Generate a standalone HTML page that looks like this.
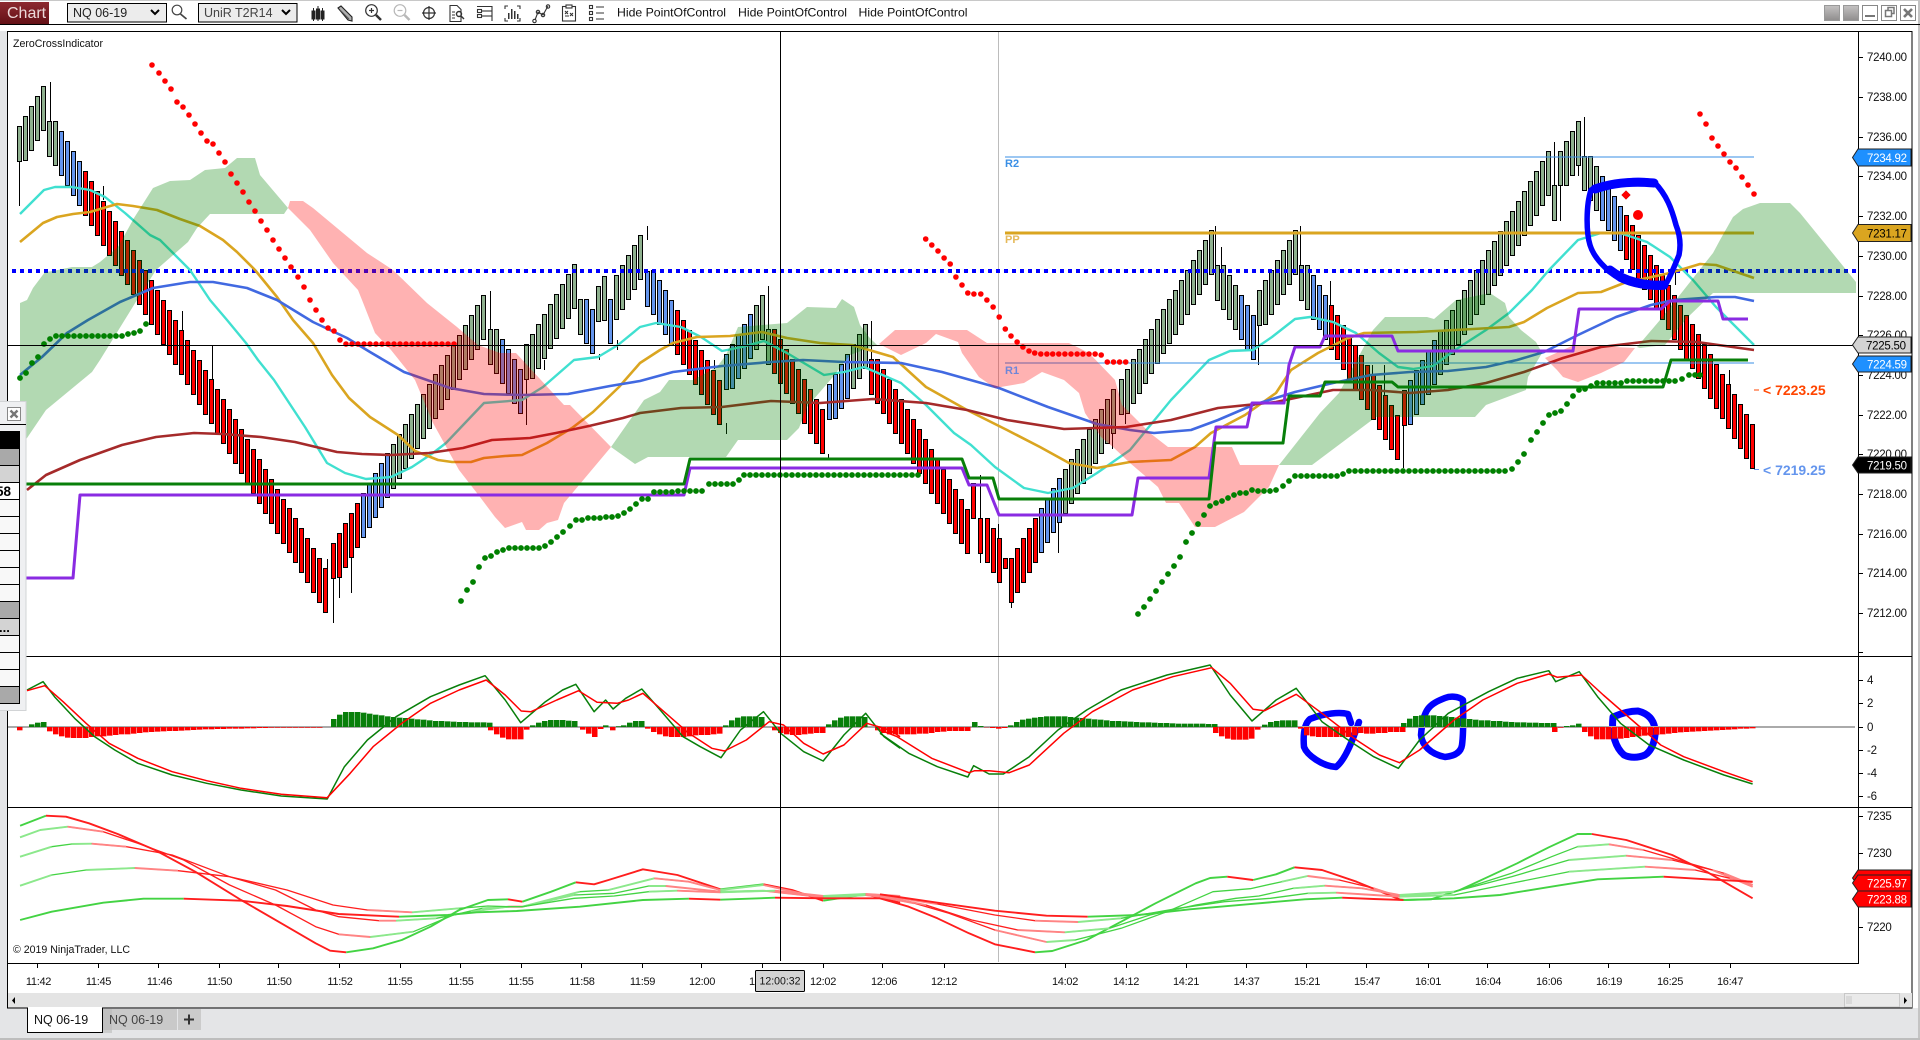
<!DOCTYPE html>
<html><head><meta charset="utf-8"><title>Chart</title>
<style>
html,body{margin:0;padding:0;background:#e4e5e7;overflow:hidden}
svg{display:block;position:absolute;left:0;top:0}
text{font-family:"Liberation Sans",Arial,sans-serif;fill:#111}
.y{font-size:11.5px;letter-spacing:-.25px}
.t{font-size:11px;text-anchor:middle;letter-spacing:-.3px}
.c{font-size:11.5px;letter-spacing:-.25px}
</style></head><body>
<svg width="1920" height="1040" viewBox="0 0 1920 1040">
<defs>
<linearGradient id="gb" x1="0" y1="0" x2="0" y2="1"><stop offset="0" stop-color="#c4c2c2"/><stop offset="1" stop-color="#8f8d8d"/></linearGradient>
<linearGradient id="rd" x1="0" y1="0" x2="0" y2="1"><stop offset="0" stop-color="#8d2a30"/><stop offset="1" stop-color="#641016"/></linearGradient>
<clipPath id="cp"><rect x="8" y="32" width="1850" height="930"/></clipPath>
</defs>
<rect width="1920" height="1040" fill="#e4e5e7"/>
<rect x="0" y="0" width="1920" height="31" fill="#fff"/>
<rect x="0" y="0" width="1920" height="1" fill="#c8c8c8"/>
<rect x="1912" y="25" width="8" height="983" fill="#fff"/>
<rect x="1918" y="0" width="2" height="1040" fill="#c4c4c4"/>
<rect x="0" y="1038" width="1920" height="2" fill="#bdbdbd"/>
<rect x="0" y="24" width="1920" height="1" fill="#000"/>

<!-- toolbar -->
<rect x="0" y="2" width="49" height="22" fill="url(#rd)"/>
<text x="7" y="18" font-size="16" style="fill:#ecd9d9">Chart</text>
<rect x="67.500" y="3.500" width="99" height="18.500" fill="#ececec" stroke="#000"/>
<text x="73" y="17" font-size="12.500" style="fill:#222">NQ 06-19</text>
<path d="M151 10l4 4 4-4" fill="none" stroke="#000" stroke-width="2"/>
<rect x="198.500" y="3.500" width="98.500" height="18.500" fill="#ececec" stroke="#000"/>
<text x="204" y="17" font-size="12.500" style="fill:#444">UniR T2R14</text>
<path d="M282 10l4 4 4-4" fill="none" stroke="#000" stroke-width="2"/>
<g fill="none" stroke="#444" stroke-width="1.200">
<circle cx="177" cy="10" r="4.800"/><path d="M180.500 14l6 5" stroke-width="1.700"/>
</g>
<g fill="#222" stroke="#222">
<path d="M313.500 8v13M318 6v15M322.500 8v13" stroke-width="1"/>
<rect x="312" y="11" width="3" height="8"/><rect x="316.500" y="9" width="3" height="10"/><rect x="321" y="11" width="3" height="8"/>
</g>
<path d="M338 8l3-2 11 11 0 4-4-1z" fill="#b0b0b0" stroke="#222" stroke-width="1.100"/>
<path d="M340 10l9 9" stroke="#555" stroke-width="1"/>
<g fill="none" stroke="#333" stroke-width="1.200"><circle cx="371.500" cy="10.500" r="5.800"/><path d="M369 10.500h5M371.500 8v5"/><path d="M376 15l5 5" stroke-width="2.500"/></g>
<g fill="none" stroke="#b8b8b8" stroke-width="1.200"><circle cx="400" cy="10.500" r="5.800"/><path d="M397.500 10.500h5"/><path d="M404.500 15l5 5" stroke-width="2.500"/></g>
<g fill="none" stroke="#333" stroke-width="1.200"><circle cx="429" cy="13" r="5.500"/><path d="M429 6v14M422 13h14"/></g>
<g fill="none" stroke="#333" stroke-width="1.100"><path d="M450 5.500h7l4 4v12h-11z"/><path d="M452 12h3M452 15h3M452 18h3"/><circle cx="459" cy="14" r="2.500" stroke-width="1.400"/><path d="M461 16l3 3" stroke-width="1.400"/></g>
<g fill="none" stroke="#333" stroke-width="1.100"><path d="M477 6.500h15M492 6v15"/><rect x="477.500" y="9.500" width="4" height="3"/><path d="M481 11h11"/><rect x="477.500" y="14.500" width="4" height="3"/><path d="M481 16h11"/></g>
<g fill="none" stroke="#333" stroke-width="1.100"><path d="M505 9v-3h3M517 6h3v3M520 18v3h-3M508 21h-3v-3"/></g>
<g fill="#333"><rect x="508" y="13" width="1.500" height="6"/><rect x="511" y="9" width="1.500" height="10"/><rect x="514" y="11" width="1.500" height="8"/><rect x="517" y="14" width="1.500" height="5"/></g>
<g fill="none" stroke="#333" stroke-width="1.100"><path d="M535 20l3-8 5 3 5-9"/><circle cx="534.500" cy="21" r="1.700"/><circle cx="538" cy="12" r="1.700"/><circle cx="543" cy="15" r="1.700"/><circle cx="548" cy="6.500" r="1.700"/></g>
<g fill="none" stroke="#333" stroke-width="1.100"><rect x="562.500" y="6.500" width="13" height="14.500"/><rect x="566" y="5" width="6" height="3" fill="#fff"/><path d="M565 11l3 3M568 11l-3 3M570 13l3 3M573 13l-3 3M565 16h4"/></g>
<g fill="none" stroke="#333" stroke-width="1.100"><rect x="589.500" y="5.500" width="3" height="3"/><rect x="589.500" y="11.500" width="3" height="3"/><rect x="589.500" y="17.500" width="3" height="3"/><path d="M596 7h8M596 13h8M596 19h8"/></g>
<text x="617" y="16.500" font-size="12" textLength="109" lengthAdjust="spacingAndGlyphs" style="fill:#111">Hide PointOfControl</text>
<text x="738" y="16.500" font-size="12" textLength="109" lengthAdjust="spacingAndGlyphs" style="fill:#111">Hide PointOfControl</text>
<text x="858.500" y="16.500" font-size="12" textLength="109" lengthAdjust="spacingAndGlyphs" style="fill:#111">Hide PointOfControl</text>
<rect x="1824.500" y="5.500" width="15" height="15" fill="url(#gb)" stroke="#999"/>
<rect x="1843.500" y="5.500" width="15" height="15" fill="url(#gb)" stroke="#999"/>
<rect x="1862.500" y="5.500" width="15" height="15" fill="#fff" stroke="#888"/><path d="M1865 16h10" stroke="#777" stroke-width="2"/>
<rect x="1881.500" y="5.500" width="15" height="15" fill="#fff" stroke="#888"/><path d="M1885.500 10.500h6v6h-6zM1888 10v-2.500h6v6h-2" fill="none" stroke="#777" stroke-width="1.500"/>
<rect x="1900.500" y="5.500" width="15" height="15" fill="#fff" stroke="#888"/><path d="M1904 9l8 8M1912 9l-8 8" stroke="#777" stroke-width="2.600"/>

<!-- chart frame -->
<rect x="7.500" y="31.500" width="1904.500" height="976.500" fill="#fff" stroke="#000"/>
<rect x="8" y="993" width="1904" height="14.500" fill="#e4e4e4"/>

<g clip-path="url(#cp)">
<path d="M998.500 32V962" stroke="#bcbcbc" stroke-width="1"/>
<g id="bars" stroke="#000" stroke-width="1"></g>
<path d="M12 271H1856" stroke="#0000ff" stroke-width="4" stroke-dasharray="4 4"/>
<g id="mas" fill="none" stroke-linejoin="round"></g>
<path d="M1005 157H1754M1005 363H1754" stroke="#3a8fe6" stroke-width="1"/>
<path d="M1005 233H1754" stroke="#daa520" stroke-width="3"/>
<g fill="#008000" fill-opacity=".3">
<polygon points="20,303 27,300 33,288 45,272 53,271 72,267 92,267 100,262 118,247 134,218 153,188 170,181 190,180 205,170 225,168 237,158 255,158 260,175 288,208 284,214 210,214 197,228 188,242 156,270 137,300 100,360 92,372 46,410 27,438 20,445"/>
<polygon points="611,447 644,400 660,392 669,380 693,380 717,367 726,355 738,327 787,323 807,307 836,308 842,299 854,307 860,325 869,337 877,345 850,355 832,378 807,407 799,428 787,440 738,440 726,457 648,457 635,464"/>
<polygon points="1279,465 1320,413 1339,393 1373,330 1385,317 1427,317 1434,319 1456,300 1490,293 1505,303 1509,317 1521,330 1536,342 1542,353 1528,377 1526,390 1486,405 1475,417 1376,417 1312,465"/>
<polygon points="1637,347 1660,320 1713,253 1720,240 1733,217 1743,209 1760,203 1790,203 1800,213 1822,240 1856,282 1856,293 1713,293 1687,318 1665,345 1640,348"/>
</g>
<g fill="#ff0000" fill-opacity=".3">
<polygon points="288,208 290,201 303,201 313,208 367,253 393,270 427,303 457,327 478,345 500,353 516,353 564,405 570,405 611,447 564,503 558,520 547,523 539,530 526,530 522,522 505,528 495,517 480,497 459,470 433,423 415,380 391,350 375,333 362,300 358,290 333,263 310,230"/>
<polygon points="879,344 895,330 967,330 987,343 1069,343 1089,353 1115,380 1122,405 1150,433 1168,447 1232,447 1240,465 1279,465 1269,487 1244,512 1215,527 1195,527 1179,503 1166,503 1158,487 1130,463 1113,447 1101,437 1085,413 1079,393 1064,380 1042,372 1024,383 995,388 979,377 962,353 958,342 936,334 926,343 901,355"/>
<polygon points="1545,358 1574,345 1635,348 1624,362 1601,373 1578,382 1563,377 1557,370"/>
</g>
<g fill="none" stroke-linejoin="round">
<polyline stroke="#8a2be2" stroke-width="3" points="26,578 73,578 80,495 684,495 690,468 962,468 969,485 987,485 999,515 1132,515 1138,478 1209,478 1216,427 1247,427 1252,403 1284,403 1289,365 1295,347 1320,347 1325,336 1392,336 1398,351 1573,351 1579,309 1661,309 1670,301 1718,301 1723,319 1748,319"/>
<polyline stroke="#087f0a" stroke-width="3" points="26,484 684,484 690,459 962,459 969,478 993,478 999,499 1209,499 1215,443 1283,443 1289,396 1320,396 1325,382 1392,382 1398,387 1663,387 1671,360 1748,360"/>
</g>
<g id="dots"></g>
<!-- hand drawn marks -->
<g fill="none" stroke="#0000ff" stroke-linecap="round" stroke-linejoin="round">
<path stroke-width="5.500" d="M1654 182C1640 179 1618 180 1591 190C1586 205 1586 232 1590 245C1594 258 1606 270 1620 279C1632 285 1650 288 1664 287C1669 280 1675 265 1679 255C1681 245 1680 235 1676 225C1672 210 1667 195 1654 182Z"/>
<path stroke-width="9" d="M1595 189C1612 183 1632 181 1654 183"/>
<path stroke-width="9" d="M1610 270C1625 282 1645 286 1664 285"/>
<path stroke-width="6.500" d="M1351 723L1348 714C1340 712 1325 713 1310 719C1304 724 1303 735 1304 747C1307 755 1322 766 1336 767C1345 760 1352 742 1359 722"/>
<path stroke-width="6.500" d="M1463 700C1458 696 1450 696 1445 698C1430 704 1423 708 1421 735C1422 745 1430 754 1445 757C1455 756 1461 752 1462 745C1464 730 1463 715 1463 700Z"/>
<path stroke-width="7" d="M1613 717C1622 713 1630 711 1638 711C1650 714 1656 722 1655 735C1654 745 1650 752 1645 755C1638 758 1630 758 1624 755C1616 748 1611 735 1613 717Z"/>
</g>
<path d="M1626 190.500l4.500 4.500-4.500 4.500-4.500-4.500z" fill="#ff0000" stroke="#c33" stroke-width=".5"/>
<circle cx="1638" cy="215" r="5" fill="#ff0000"/>
<!-- MACD -->
<path d="M8 727H1855" stroke="#aaa" stroke-width="2"/>
<g id="hist"></g>
<g id="macd" fill="none" stroke-width="1.500" stroke-linejoin="round"></g>
<g id="rib" fill="none" stroke-linejoin="round"></g>
<!-- crosshair -->
<path d="M780.500 32V961" stroke="#000" stroke-width="1"/>
<path d="M8 345.500H1858" stroke="#000" stroke-width="1"/>
</g>
<path d="M7 656.500H1912M7 807.500H1912M7 963.500H1858M1858.500 31V964" stroke="#000" stroke-width="1"/>

<text x="13" y="47" font-size="10.700" textLength="90" lengthAdjust="spacingAndGlyphs">ZeroCrossIndicator</text>
<text x="13" y="953" font-size="10.700" textLength="117" lengthAdjust="spacingAndGlyphs">© 2019 NinjaTrader, LLC</text>
<text x="1005" y="167" font-size="11" font-weight="bold" style="fill:#3a8fe6">R2</text>
<text x="1005" y="243" font-size="11" font-weight="bold" style="fill:#e5b95a">PP</text>
<text x="1005" y="374" font-size="11" font-weight="bold" style="fill:#6f86d8">R1</text>
<path d="M1754 390h5" stroke="#ff4500"/><path d="M1754 469.500h5" stroke="#6495ed"/>
<text x="1763" y="395" font-size="14" font-weight="bold" style="fill:#ff4500">&lt; 7223.25</text>
<text x="1763" y="475" font-size="14" font-weight="bold" style="fill:#6495ed">&lt; 7219.25</text>

<!-- y axis -->
<path stroke="#000" d="M1858 57.500h5M1858 97.500h5M1858 137.500h5M1858 176.500h5M1858 216.500h5M1858 256.500h5M1858 296.500h5M1858 335.500h5M1858 375.500h5M1858 415.500h5M1858 454.500h5M1858 494.500h5M1858 534.500h5M1858 573.500h5M1858 613.500h5M1858 652.500h5M1858 680.500h5M1858 703.500h5M1858 727.500h5M1858 750.500h5M1858 773.500h5M1858 796.500h5M1858 816.500h5M1858 853.500h5M1858 927.500h5"/>
<g class="y">
<text x="1867" y="61">7240.00</text><text x="1867" y="101">7238.00</text><text x="1867" y="141">7236.00</text><text x="1867" y="180">7234.00</text><text x="1867" y="220">7232.00</text><text x="1867" y="260">7230.00</text><text x="1867" y="300">7228.00</text><text x="1867" y="339">7226.00</text><text x="1867" y="379">7224.00</text><text x="1867" y="419">7222.00</text><text x="1867" y="458">7220.00</text><text x="1867" y="498">7218.00</text><text x="1867" y="538">7216.00</text><text x="1867" y="577">7214.00</text><text x="1867" y="617">7212.00</text>
<text x="1867" y="684">4</text><text x="1867" y="707">2</text><text x="1867" y="731">0</text><text x="1867" y="754">-2</text><text x="1867" y="777">-4</text><text x="1867" y="800">-6</text>
<text x="1867" y="820">7235</text><text x="1867" y="857">7230</text><text x="1867" y="931">7220</text>
</g>
<!-- price chips -->
<g stroke="#222" stroke-width="1">
<polygon fill="#1e90ff" points="1852.500,157.500 1858,149 1911,149 1911,166 1858,166"/>
<polygon fill="#daa520" points="1852.500,233 1858,224.500 1911,224.500 1911,241.500 1858,241.500"/>
<polygon fill="#d3d3d3" points="1852.500,345 1858,337 1911,337 1911,353 1858,353"/>
<polygon fill="#1e90ff" points="1852.500,364 1858,356 1911,356 1911,372 1858,372"/>
<polygon fill="#000" points="1852.500,465 1858,457 1911,457 1911,473 1858,473"/>
<polygon fill="#ff0000" points="1852.500,878 1858,870 1911,870 1911,886 1858,886"/>
<polygon fill="#ff0000" points="1852.500,883 1858,875 1911,875 1911,891 1858,891"/>
<polygon fill="#ff0000" points="1852.500,899 1858,891 1911,891 1911,907 1858,907"/>
</g>
<g class="c">
<text x="1867" y="162" style="fill:#fff">7234.92</text>
<text x="1867" y="237.500" style="fill:#000">7231.17</text>
<text x="1866" y="349.500" style="fill:#000">7225.50</text>
<text x="1867" y="368.500" style="fill:#fff">7224.59</text>
<text x="1867" y="469.500" style="fill:#fff">7219.50</text>
<text x="1867" y="887.500" style="fill:#fff">7225.97</text>
<text x="1867" y="903.500" style="fill:#fff">7223.88</text>
</g>

<!-- x axis -->
<path stroke="#000" d="M37.500 963v5M98.500 963v5M158.500 963v5M219.500 963v5M278.500 963v5M339.500 963v5M400.500 963v5M460.500 963v5M521.500 963v5M581.500 963v5M642.500 963v5M701.500 963v5M762.500 963v5M823.500 963v5M882.500 963v5M944.500 963v5M1065.500 963v5M1126.500 963v5M1186.500 963v5M1246.500 963v5M1306.500 963v5M1366.500 963v5M1428.500 963v5M1487.500 963v5M1549.500 963v5M1608.500 963v5M1669.500 963v5M1730.500 963v5"/>
<g class="t">
<text x="38.500" y="985">11:42</text><text x="98.500" y="985">11:45</text><text x="159.500" y="985">11:46</text><text x="219.500" y="985">11:50</text><text x="279" y="985">11:50</text><text x="340" y="985">11:52</text><text x="400" y="985">11:55</text><text x="461" y="985">11:55</text><text x="521" y="985">11:55</text><text x="582" y="985">11:58</text><text x="642.500" y="985">11:59</text><text x="702" y="985">12:00</text><text x="762" y="985">12:01</text><text x="823" y="985">12:02</text><text x="884" y="985">12:06</text><text x="944" y="985">12:12</text><text x="1065" y="985">14:02</text><text x="1126" y="985">14:12</text><text x="1186" y="985">14:21</text><text x="1246.500" y="985">14:37</text><text x="1307" y="985">15:21</text><text x="1367" y="985">15:47</text><text x="1428" y="985">16:01</text><text x="1488" y="985">16:04</text><text x="1549" y="985">16:06</text><text x="1609" y="985">16:19</text><text x="1670" y="985">16:25</text><text x="1730" y="985">16:47</text>
</g>
<rect x="755.500" y="970.500" width="49" height="21" fill="#d3d3d3" stroke="#000" rx="1"/>
<text x="780" y="984.500" font-size="10.700" text-anchor="middle" textLength="41" lengthAdjust="spacingAndGlyphs">12:00:32</text>

<!-- scrollbar -->
<path d="M15 997v7l-3-3.500z" fill="#000"/>
<rect x="1844.500" y="993.500" width="55" height="13.500" fill="#eaeaea" stroke="#c8c8c8"/>
<path d="M1847 996v8M1849 996v8M1851 996v8" stroke="#c8c8c8"/>
<path d="M1904 997v7l3-3.500z" fill="#000"/>

<!-- tabs -->
<rect x="102" y="1009" width="75" height="21" fill="#c9c9c9"/>
<rect x="178" y="1009" width="23" height="21" fill="#cbcbcb"/>
<rect x="102" y="1009" width="10" height="24" fill="#bbb" opacity=".6"/>
<rect x="27.500" y="1008" width="75" height="24.500" fill="#fff" stroke="#000"/>
<rect x="28" y="1007" width="74" height="2" fill="#fff"/>
<text x="34" y="1024" font-size="12.500" style="fill:#111">NQ 06-19</text>
<text x="109" y="1024" font-size="12.500" style="fill:#444">NQ 06-19</text>
<path d="M184 1019.500h10M189 1014.500v10" stroke="#333" stroke-width="2"/>

<!-- floating data box -->
<rect x="-2" y="401.500" width="28" height="309" fill="#eff0f2" stroke="#d2d4d6"/>
<rect x="7.500" y="407.500" width="13" height="13" fill="#fff" stroke="#888"/>
<path d="M10.500 410.500l7 7M17.500 410.500l-7 7" stroke="#777" stroke-width="2.400"/>
<path d="M0 424.500H26" stroke="#000"/>
<g stroke="#000" stroke-width="1">
<rect x="-2" y="431.500" width="21.500" height="17" fill="#000"/>
<rect x="-2" y="448.500" width="21.500" height="17" fill="#a9a9a9"/>
<rect x="-2" y="465.500" width="21.500" height="17" fill="#d3d3d3"/>
<rect x="-2" y="482.500" width="21.500" height="17" fill="#fff"/>
<rect x="-2" y="499.500" width="21.500" height="17" fill="#f8f8f8"/>
<rect x="-2" y="516.500" width="21.500" height="17" fill="#f8f8f8"/>
<rect x="-2" y="533.500" width="21.500" height="17" fill="#f8f8f8"/>
<rect x="-2" y="550.500" width="21.500" height="17" fill="#f8f8f8"/>
<rect x="-2" y="567.500" width="21.500" height="17" fill="#f8f8f8"/>
<rect x="-2" y="584.500" width="21.500" height="17" fill="#f8f8f8"/>
<rect x="-2" y="601.500" width="21.500" height="17" fill="#a9a9a9"/>
<rect x="-2" y="618.500" width="21.500" height="17" fill="#d3d3d3"/>
<rect x="-2" y="635.500" width="21.500" height="17" fill="#f8f8f8"/>
<rect x="-2" y="652.500" width="21.500" height="17" fill="#f8f8f8"/>
<rect x="-2" y="669.500" width="21.500" height="17" fill="#f8f8f8"/>
<rect x="-2" y="686.500" width="21.500" height="17" fill="#a9a9a9"/>
</g>
<text x="-4" y="496" font-size="13.500" font-weight="bold" style="fill:#000">58</text>
<text x="-1" y="632" font-size="13" font-weight="bold" style="fill:#000">...</text>
</svg>
<script>
(function(){
var G='#8fb18f',B='#6495ed',R='#ff0000';
var $=function(i){return document.getElementById(i)};
var P=function(s){return s.trim().split(/\s+/).map(function(p){return p.split(',').map(Number)})};
var S=function(a){return a.map(function(p){return p[0].toFixed(1)+','+p[1].toFixed(1)}).join(' ')};
var zf=function(x0,sx,y0){return function(p){return [x0+p[0]/sx,y0+p[1]/3]}};
var z7=zf(0,3,60),z9=zf(640,2.45,220),z10=zf(1180,2.613,110),z2=zf(1500,3,0),z11=zf(0,1.742,650),z12=zf(880,1.742,650);
/* bars */
var b='';
function run(x,t,n,d,c,h){h=h||45;for(var i=0;i<n;i++){b+='<rect x="'+(Math.round(x+6*i)+.5)+'" y="'+(Math.round(t+d*i)+.5)+'" width="4" height="'+(h-1)+'" fill="'+c+'"/>'}}
var w=[[19.5,161,206],[50,82,121],[103,186,200],[182,311,330],[212.5,345,379],[327,559,568],[333,578,623],[339,578,598],[351,558,593],[490,291,329],[526,345,425],[544,360,370],[599,354,360],[617,340,350],[647,226,240],[714,360,369],[726.5,423,434],[768.5,286,329],[828.5,454,459],[871,321,359],[980,475,563],[998,524,538],[998,568,583],[1011,603,608],[1058,523,553],[1112,434,449],[1125.5,414,424],[1215.5,226,265],[1221,247,265],[1258.5,325,365],[1300,226,265],[1276,285,303],[1330,281,305],[1372,365,375],[1384,365,395],[1403,425,468],[1554,142,185],[1560,185,221],[1578,166,176],[1584.5,117,156],[1675.5,272,285],[1729.5,370,385],[1754,464,469]];
var ws='';w.forEach(function(a){ws+='<path d="M'+(Math.floor(a[0])+.5)+' '+a[1]+'V'+a[2]+'"/>'});
run(17,126,1,0,G,36);run(23,116,4,-10,G);run(47,121,1,0,G,36);run(53,121,1,0,G);run(59,131,4,10,B);run(83,171,41,9.925,R);
run(331,543,1,0,R,36);run(337,533,4,-10,R);run(361,493,5,-10,B);run(391,444,15,-9.93,G);run(481,295,1,0,G);
run(488,329,1,0,G,36);run(494,329,1,0,G);run(500,339,4,10,B);
run(524,344,1,0,G,36);run(530,334,8,-10,G);run(578,299,1,0,G,36);run(584,299,1,0,B);run(590,309,1,0,B);
run(596,286,1,0,G,36);run(602,276,1,0,G);run(608,299,1,0,B);run(614,275,5,-10,G);
run(645,271,1,0,B,36);run(651,270,4,10,B);run(675,310,8,10,R);
run(724,354,1,0,B,36);run(730,344,4,-10,B);run(754,305,2,-10,G);
run(766,329,1,0,G,36);run(772,329,9,10,R);
run(827,384,1,0,B,36);run(833,374,3,-10,B);run(851,344,3,-10,G);
run(869,359,1,0,R,36);run(875,359,16,10,R);
run(971,483,1,0,R,36);run(978,518,1,0,R,36);run(985,518,3,10,R);run(1003,558,1,0,R,11);run(1009,558,1,0,R);
run(1015,548,4,-10,R);run(1039,508,4,-10,B);run(1063,469,9,-10,G);
run(1119,379,1,0,G,36);run(1125,369,15,-9.93,G);
run(1215,265,1,0,G,36);run(1221,265,3,10,G);run(1239,295,3,10,B);
run(1257,290,1,0,G,36);run(1263,280,6,-10,G);
run(1299,265,1,0,G,36);run(1305,265,1,0,G);run(1311,275,3,10,B);run(1329,305,12,10,R);
run(1402,390,1,0,R,36);run(1408,380,5,-10,B);run(1438,330,19,-9.94,G);
run(1552,185,1,0,G,36);run(1558,151,1,0,G,35);run(1564,141,3,-10,G);
run(1582,156,1,0,G,35);run(1588,156,2,10,G);run(1600,176,4,10,B);run(1624,215,22,9.95,R);
$('bars').innerHTML=ws+b;
/* moving averages */
var ma=[
['#40e0d0',2.4,'20,214 44,190 55,187 72,187 90,190 105,197 125,213 150,235 160,240 190,270 210,300 227,320 246,343 258,360 274,380 305,427 327,463 345,473 366,479 391,477 412,467 433,453 446,443 484,403 522,400 543,387 574,360 598,357 618,345 640,327 656,323 681,327 701,337 722,351 742,347 764,341 787,353 824,375 844,372 864,367 901,383 926,405 954,433 971,445 995,467 1024,488 1048,493 1073,488 1097,473 1130,450 1171,400 1209,360 1230,351 1253,350 1272,337 1295,319 1310,317 1333,322 1356,333 1379,353 1398,367 1413,369 1433,366 1455,350 1486,330 1509,313 1532,290 1549,270 1578,240 1601,233 1620,233 1647,242 1670,257 1693,280 1716,307 1739,330 1754,345'],
['#daa520',2.6,'20,242 43,223 57,217 73,214 90,212 117,204 133,206 157,210 180,219 200,226 223,240 237,252 255,270 277,297 293,320 313,343 332,375 349,398 370,417 398,435 415,451 438,460 452,462 471,462 484,458 505,456 522,455 547,443 572,428 593,412 619,387 640,363 660,350 673,343 697,337 730,336 762,332 787,338 820,343 852,345 893,357 926,387 967,410 1007,430 1040,447 1069,463 1097,468 1130,462 1171,460 1195,447 1211,433 1245,415 1276,393 1291,370 1318,353 1348,338 1364,333 1417,332 1455,330 1509,327 1524,322 1547,308 1578,293 1601,292 1624,283 1670,273 1700,264 1716,265 1754,278'],
['#4169e1',2.6,'20,375 42,357 67,333 88,320 120,302 153,288 190,282 213,282 247,288 277,300 313,322 347,338 370,352 404,372 450,388 484,394 522,395 568,394 610,386 640,381 673,372 722,366 771,362 803,360 844,362 901,363 942,372 999,388 1048,407 1097,424 1130,430 1154,433 1191,430 1218,420 1253,405 1295,392 1333,383 1371,375 1410,372 1448,371 1486,367 1517,360 1544,352 1578,335 1616,317 1651,305 1674,300 1716,297 1735,297 1754,301'],
['#a52a2a',2.6,'27,490 46,475 80,460 122,445 156,437 194,433 223,434 261,437 295,442 337,452 362,454 391,455 429,453 463,448 492,440 530,438 556,433 589,426 623,418 640,413 681,408 722,407 771,401 820,403 873,399 926,403 967,410 1007,420 1064,429 1126,427 1171,420 1218,408 1276,402 1333,390 1371,390 1410,393 1448,390 1486,383 1524,372 1563,358 1601,347 1651,341 1697,342 1754,350']];
var m='';ma.forEach(function(a){m+='<polyline stroke="'+a[0]+'" stroke-width="'+a[1]+'" points="'+a[2]+'"/>'});$('mas').innerHTML=m;
/* dots */
var d='';
function dot(arr,c,r){arr.forEach(function(p){d+='<circle cx="'+p[0].toFixed(1)+'" cy="'+p[1].toFixed(1)+'" r="'+r+'" fill="'+c+'"/>'})}
function flat(a,b2,y,st){var o=[];for(var x=a;x<=b2;x+=(st||6))o.push([x,y]);return o}
dot(P('456,15 477,39 495,63 513,87 531,126 549,141 567,165 585,192 603,219 621,243 639,252 657,279 675,306 693,342 711,369 729,396 747,426 765,453 783,483 801,510 819,540 837,567 855,594 873,621 894,651 912,681 930,720 948,750 966,780 984,804 1002,813 1020,840').map(z7),'#ff0000',2.8);
dot(flat(346,455,344),'#ff0000',2.8);
dot(P('700,57 715,75 730,93 745,114 760,132 774,171 789,195 803,219 818,222 835,222 850,240 865,261 880,291 895,327 909,348 924,366 938,381 953,393 967,399 982,402 997,402 1011,402 1026,402 1041,402 1056,402 1071,402 1085,402 1100,402 1115,402 1130,405 1145,426 1160,426 1175,426 1190,426').map(z9),'#ff0000',2.8);
dot(P('600,342 618,372 636,414 654,438 672,462 690,486 708,504 726,531 744,555 762,582').map(z2),'#ff0000',2.8);
var g=P('20,378 26,373 32,363 38,357 44,344 50,339').concat(flat(56,122,336),P('128,334 134,333 140,331 146,324'));
g=g.concat(P('461,601 467,590 473,582 479,567 485,558 491,556 497,552 503,550'),flat(509,539,548),P('545,546 551,542 557,537 563,532 570,526 576,520 582,520 588,518 594,518 600,518 606,517 612,517 618,516 624,513 630,509 636,504 642,499 648,499 654,492 660,492 666,492 672,492 678,491 684,491 690,491 696,491 702,491 709,484 715,484 721,484 727,484 733,484 739,480 744,475'),flat(750,921,475));
g=g.concat(P('1138,614 1144,607 1150,599 1156,591 1162,582 1168,574 1174,566 1180,557 1186,542 1192,533 1198,524 1204,515 1210,506 1216,503 1222,501 1228,498 1234,495 1240,493 1246,493 1252,490 1258,491 1264,491 1270,491 1276,490 1283,486 1289,481 1295,476'),flat(1301,1339,476),[[1343,474]],flat(1349,1509,471),P('1512,469 1518,462 1524,454 1531,440 1537,432 1543,423 1549,415 1555,413 1561,411 1567,404 1573,396 1579,390 1585,389 1591,386 1597,383'),flat(1603,1621,383),flat(1627,1677,381),P('1682,379 1689,375 1695,375 1700,375'));
dot(g,'#008000',2.9);
$('dots').innerHTML=d;
/* histogram */
var h='';
function hist(x,c,a){a.forEach(function(v,i){var H=v/3;var up=c=='#087f0a';h+='<rect x="'+(x+6*i)+'" y="'+(up?727-H:727)+'" width="5.5" height="'+H+'" fill="'+c+'"/>'})}
var Gn='#087f0a',Rd='#ff0000';
hist(17,Rd,[10]);hist(29,Gn,[8,13,15]);
hist(47,Rd,[13,22,28,32,33,33,33,30,28,28,26,24,22,22,20,18,16,15,14,13,12,12,11,10,9,8,7,7,6,6,5,5,5,4,4,3,3,2,2,2,2,2,2,2,2,2]);
hist(331,Gn,[24,37,45,45,45,43,40,37,35,32,30,28,27,25,23,22,20,18,18,17,16,15,15,14,14,14,13]);
hist(488,Rd,[10,22,32,37,37,37,8]);hist(530,Gn,[5,13,18,21,21,21,19,18]);
hist(580,Rd,[8,20,30,6]);hist(603,Gn,[5]);hist(610,Rd,[10]);hist(616,Gn,[2]);hist(621,Gn,[5,13,18,18]);
hist(645,Rd,[5,15,22,28,30,30,30,28,25,24,24,22,20]);hist(723,Gn,[5,20,28,32,32,32,30]);
hist(772,Rd,[10,18,22,24,24,22,20,18,18]);hist(826,Gn,[8,20,28,32,32,32,30]);
hist(875,Rd,[10,18,22,22,22,22,22,20,20,18,15,14,12,12,12,12]);
hist(972,Gn,[15,3]);hist(984,Rd,[1,3,5,3]);
hist(1008,Gn,[5,15,22,25,28,30,32,32,32,32,30,28,27,25,23,22,20,18,18,17,16,15,14,14,13,12,12,11,10,10,10,10,10,9,9]);
hist(1213,Rd,[18,28,35,38,38,38,35,8]);hist(1262,Gn,[7,15,18,20,20,20]);
hist(1298,Rd,[5,25,28,30,30,30,30,30,30,25,18,20,20,18,18,15,15,15]);
hist(1401,Gn,[12,25,33,35,35,35,33,32,30,28,26,24,22,20,20,18,18,16,15,14,14,13,13,12,12,12]);
hist(1552,Rd,[15,2]);hist(1564,Gn,[3,5,10]);
hist(1582,Rd,[15,28,37,37,37,35,35,33,30,28,26,25,23,22,20,18,16,15,14,13,12,11,10,9,8,7,5,5,4]);
$('hist').innerHTML=h;
/* macd */
var mc='';
function pl(s,z,c){mc+='<polyline stroke="'+c+'" points="'+S(P(s).map(z))+'"/>'}
pl('47,120 75,95 95,140 130,205 165,260 200,300 240,340 300,375 360,400 420,420 490,438 570,447 600,350 640,270 690,200 750,140 800,105 845,77 880,150 907,218 950,155 980,120 1003,103 1035,185 1055,150 1068,177 1090,145 1118,117 1150,180 1190,260 1220,290 1256,323 1290,240 1330,185 1360,250 1400,305 1434,333 1470,255 1508,190 1540,260 1568,295',z11,'#087f0a');
pl('0,250 50,310 100,350 153,381 163,347 190,372 215,372 260,320 310,240 360,180 420,120 500,75 575,45 610,135 648,213 690,150 725,115 770,215 820,275 860,320 903,355 940,270 990,190 1060,125 1110,85 1165,62 1177,95 1218,65 1250,140 1290,220 1340,285 1400,330 1470,375 1520,402',z12,'#087f0a');
pl('47,122 78,107 110,155 150,220 190,280 240,325 300,365 360,392 420,415 490,433 570,443 610,370 650,290 700,220 750,160 800,120 847,90 880,135 908,183 925,185 970,150 1008,122 1040,157 1075,160 1095,150 1120,130 1160,190 1200,250 1240,295 1262,303 1300,270 1340,215 1365,225 1400,280 1434,312 1470,285 1510,220 1550,240 1568,260',z11,'#ff0000');
pl('0,240 30,260 90,325 155,368 165,362 190,362 225,368 260,345 320,250 370,185 440,120 510,80 578,53 610,100 650,178 670,182 700,155 725,133 770,190 830,270 870,315 905,338 940,300 1000,210 1050,150 1110,100 1165,72 1180,82 1222,75 1260,135 1310,210 1360,285 1400,320 1470,365 1520,395',z12,'#ff0000');
$('macd').innerHTML=mc;
/* ribbons: outer lines thick and saturated, middle lines thin with pale first/last segments */
var col={g:'#43d343',r:'#ff1e1e',l:'#8ce88c',p:'#ff8484'},rb='';
function seg(a,c,w,z){if(a.length>1)rb+='<polyline stroke="'+c+'" stroke-width="'+w+'" points="'+S(a.map(z))+'"/>'}
function rib(s,z,thin){var t=s.trim().split(/\s+/),c=null,a=[],last=null;
 function fl(){if(a.length<2)return;
  var sat=(c=='g'||c=='l')?col.g:col.r,pale=(c=='g'||c=='l')?col.l:col.p;
  if(!thin){seg(a,sat,1.9,z);return}
  seg(a,sat,1.3,z);
  seg(a.slice(0,2),pale,1.9,z);
  if(a.length>2)seg(a.slice(-2),pale,1.9,z);
 }
 t.forEach(function(k){if(col[k]){fl();c=k;a=last?[last]:[]}else{last=k.split(',').map(Number);a.push(last)}});fl()}
rib('g 35,527 80,497 r 115,500 155,520 205,552 270,600 340,665 420,750 490,820 550,880 575,902 603,907 g 650,895 700,870 750,830 800,780 850,750 885,748 r 910,755 g 960,725 1003,697 r 1035,703 1060,690 1120,658 1180,675 1255,718 g 1330,703 r 1380,720 1434,752 g 1508,733 r 1568,758',z11,false);
rib('l 35,562 70,540 118,530 p 180,545 240,580 320,630 400,705 480,765 550,830 590,853 645,861 l 720,845 790,795 840,775 890,770 r 910,770 l 1010,725 1060,720 1140,685 p 1200,695 1255,720 l 1330,705 p 1434,745 l 1508,735 p 1568,748',z11,true);
rib('l 35,620 90,590 125,582 160,581 p 220,590 300,615 400,680 480,720 550,780 590,800 660,812 690,812 l 760,805 820,785 885,770 p 910,770 l 1000,735 1070,730 1130,708 1160,708 p 1255,725 l 1330,722 p 1434,742 l 1508,735 p 1568,742',z11,true);
rib('l 35,707 90,675 150,660 235,654 p 310,662 400,680 500,720 580,765 640,780 718,787 l 800,775 850,768 885,770 910,770 1000,745 1070,738 1130,725 1180,722 p 1255,727 l 1350,722 p 1434,738 l 1508,732 p 1568,738',z11,true);
rib('g 35,810 90,785 180,758 250,746 320,746 r 420,752 500,768 590,792 695,800 g 780,795 830,787 900,783 1010,770 1120,750 1200,746 r 1255,749 g 1350,743 r 1434,745 1500,745 1568,745',z11,false);
rib('r 0,745 50,770 100,805 155,850 200,883 270,907 g 300,903 360,870 420,815 480,760 550,700 575,684 605,680 r 650,690 g 690,673 722,652 r 770,660 830,695 905,748 g 915,750 960,748 1010,720 1060,680 1110,640 1165,592 1215,552 1240,552 r 1300,570 1380,615 1440,665 1520,745',z12,false);
rib('r 0,740 60,760 120,790 200,840 290,876 l 340,870 420,835 500,785 580,725 645,716 700,695 745,678 p 800,690 860,715 905,740 l 1000,725 1100,670 1170,620 1215,590 1270,583 p 1330,600 1400,635 1470,670 1520,705',z12,true);
rib('p 0,738 80,765 160,810 240,840 322,847 l 400,835 470,795 550,765 620,745 660,738 720,715 775,707 p 840,715 905,735 l 1000,725 1100,680 1200,630 1300,617 p 1380,630 1450,660 1520,710',z12,true);
rib('r 0,735 100,762 200,795 270,812 345,816 l 420,805 520,775 600,755 680,745 745,730 795,728 p 860,735 905,740 l 1000,735 1100,700 1200,665 1333,650 p 1420,660 1480,685 1520,697',z12,true);
rib('r 0,733 100,758 200,782 290,797 362,800 g 450,795 540,778 640,763 740,748 805,743 r 860,747 912,750 g 1000,745 1080,735 1180,707 1250,688 1365,680 r 1440,688 1520,695',z12,false);
$('rib').innerHTML=rb;
})();
</script>
</body></html>
